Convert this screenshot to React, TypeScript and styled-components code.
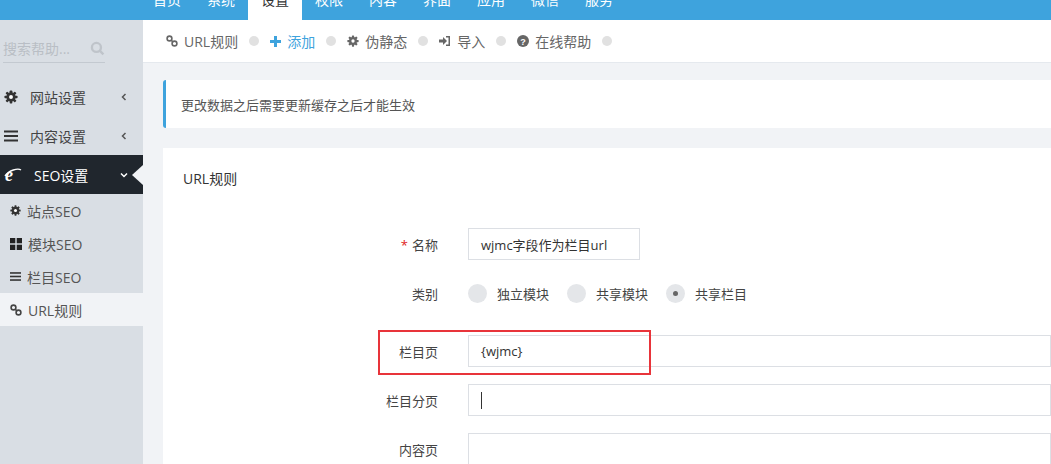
import React from 'react';
import styled, { createGlobalStyle } from 'styled-components';

const Global = createGlobalStyle`
  html, body { margin: 0; padding: 0; overflow: hidden; }
  body { font-family: "Open Sans", "Noto Sans CJK SC", sans-serif; font-size: 13px; color: #555; background: #f1f3f6; }
`;

const Page = styled.div`
  width: 1051px;
  height: 464px;
  display: flex;
  flex-direction: column;
  overflow: hidden;
`;

const TopBar = styled.div`
  height: 20px;
  background: #3ea3dd;
  overflow: hidden;
  flex-shrink: 0;
`;

const NavList = styled.div`
  display: flex;
  margin-top: -20px;
  padding-left: 140px;
`;

const NavItem = styled.div<{ $active?: boolean }>`
  height: 40px;
  line-height: 40px;
  padding: 0 13px;
  font-size: 14px;
  color: ${(p) => (p.$active ? '#333' : '#fff')};
  background: ${(p) => (p.$active ? '#fff' : 'transparent')};
`;

const Body = styled.div`
  flex: 1;
  display: flex;
  min-height: 0;
`;

const Sidebar = styled.div`
  width: 143px;
  flex-shrink: 0;
  background: #d9dee4;
`;

const Search = styled.div`
  margin: 14px 0 0 3px;
  width: 102px;
  height: 28px;
  border-bottom: 1px solid #c3c9d0;
  display: flex;
  align-items: center;
  justify-content: space-between;
  color: #b9bec5;
  font-size: 14px;
`;

const MenuItem = styled.div<{ $dark?: boolean }>`
  height: 39px;
  display: flex;
  align-items: center;
  padding: 0 14px 0 4px;
  gap: 12px;
  font-size: 14px;
  color: ${(p) => (p.$dark ? '#fff' : '#444')};
  background: ${(p) => (p.$dark ? '#20262d' : 'transparent')};
  position: relative;
  span { flex: 1; }
`;

const Notch = styled.div`
  position: absolute;
  right: 0;
  top: 10px;
  border-style: solid;
  border-width: 10px 11px 10px 0;
  border-color: transparent #f1f3f6 transparent transparent;
`;

const SubItem = styled.div<{ $active?: boolean }>`
  height: 33px;
  display: flex;
  align-items: center;
  gap: 6px;
  padding-left: 10px;
  font-size: 14px;
  color: #555;
  background: ${(p) => (p.$active ? '#f1f3f6' : 'transparent')};
`;

const Main = styled.div`
  flex: 1;
  display: flex;
  flex-direction: column;
  min-width: 0;
`;

const Toolbar = styled.div`
  height: 42px;
  background: #fff;
  border-bottom: 1px solid #e5e9ee;
  display: flex;
  align-items: center;
  padding-left: 23px;
  gap: 11px;
  font-size: 14px;
  color: #666;
  flex-shrink: 0;
`;

const Tool = styled.div<{ $blue?: boolean }>`
  display: flex;
  align-items: center;
  gap: 6px;
  color: ${(p) => (p.$blue ? '#3ea3dd' : '#666')};
`;

const Dot = styled.div`
  width: 10px;
  height: 10px;
  border-radius: 50%;
  background: #e1e1e1;
`;

const Content = styled.div`
  padding: 17px 0 0 20px;
  display: flex;
  flex-direction: column;
  gap: 20px;
`;

const Notice = styled.div`
  height: 48px;
  background: #fff;
  border-left: 3px solid #3ea3dd;
  border-radius: 3px 0 0 3px;
  display: flex;
  align-items: center;
  padding-left: 15px;
  color: #555;
`;

const Card = styled.div`
  background: #fff;
  padding: 20px 0 0 20px;
  height: 330px;
`;

const CardTitle = styled.div`
  font-size: 14px;
  color: #333;
  margin-bottom: 40px;
`;

const Row = styled.div`
  display: grid;
  grid-template-columns: 255px 1fr;
  column-gap: 30px;
  align-items: center;
  height: 32px;
  margin-bottom: 17px;
  position: relative;
`;

const Label = styled.div`
  text-align: right;
  font-size: 13px;
  color: #444;
  em { color: #e02222; font-style: normal; margin-right: 4px; }
`;

const Input = styled.div<{ $w?: number }>`
  height: 32px;
  box-sizing: border-box;
  border: 1px solid #dcdfe4;
  padding: 0 12px;
  display: flex;
  align-items: center;
  font-size: 13px;
  color: #333;
  width: ${(p) => (p.$w ? `${p.$w}px` : 'auto')};
`;

const Caret = styled.div`
  width: 1px;
  height: 17px;
  background: #333;
`;

const Radios = styled.div`
  display: flex;
  gap: 18px;
  align-items: center;
`;

const Radio = styled.div`
  display: flex;
  align-items: center;
  gap: 10px;
  font-size: 13px;
  color: #444;
`;

const Circle = styled.div<{ $on?: boolean }>`
  width: 19px;
  height: 19px;
  border-radius: 50%;
  background: #e4e6e9;
  display: flex;
  align-items: center;
  justify-content: center;
  &::after {
    content: '';
    display: ${(p) => (p.$on ? 'block' : 'none')};
    width: 5px;
    height: 5px;
    border-radius: 50%;
    background: #666;
  }
`;

const Highlight = styled.div`
  position: absolute;
  left: 195px;
  top: -5px;
  width: 273px;
  height: 45px;
  border: 2px solid #e8343a;
  box-sizing: border-box;
  pointer-events: none;
`;

const Gear = ({ c = '#333', s = 12 }: { c?: string; s?: number }) => (
  <svg width={s} height={s} viewBox="0 0 16 16">
    <g fill={c}>
      {[0, 45, 90, 135].map((a) => (
        <rect key={a} x="6.5" y="0.5" width="3" height="15" rx="0.8" transform={`rotate(${a} 8 8)`} />
      ))}
      <circle cx="8" cy="8" r="5.3" />
    </g>
    <circle cx="8" cy="8" r="2.2" fill="#fff" />
  </svg>
);

const Bars = ({ s = 12 }: { s?: number }) => (
  <svg width={s} height={s} viewBox="0 0 14 12">
    <rect y="0.5" width="14" height="2" fill="#333" />
    <rect y="5" width="14" height="2" fill="#333" />
    <rect y="9.5" width="14" height="2" fill="#333" />
  </svg>
);

const LinkIcon = ({ c = '#444' }: { c?: string }) => (
  <svg width="12" height="12" viewBox="0 0 12 12" fill="none" stroke={c} strokeWidth="1.6">
    <circle cx="3.5" cy="3.5" r="2.4" />
    <circle cx="8.5" cy="8.5" r="2.4" />
    <path d="M5 5l2 2" />
  </svg>
);

const Chevron = ({ down }: { down?: boolean }) => (
  <svg width="10" height="10" viewBox="0 0 10 10" fill="none" stroke={down ? '#fff' : '#555'} strokeWidth="1.5">
    {down ? <path d="M2 3.5l3 3 3-3" /> : <path d="M6.5 2l-3 3 3 3" />}
  </svg>
);

export default function App() {
  return (
    <Page>
      <Global />
      <TopBar>
        <NavList>
          {['首页', '系统', '设置', '权限', '内容', '界面', '应用', '微信', '服务'].map((n) => (
            <NavItem key={n} $active={n === '设置'}>{n}</NavItem>
          ))}
        </NavList>
      </TopBar>
      <Body>
        <Sidebar>
          <Search>
            <span>搜索帮助...</span>
            <svg width="15" height="15" viewBox="0 0 14 14" fill="none" stroke="#bfc4ca" strokeWidth="2.2">
              <circle cx="6" cy="6" r="4.2" />
              <path d="M9 9l3.5 3.5" />
            </svg>
          </Search>
          <div style={{ height: 14 }} />
          <MenuItem><Gear s={14} /><span>网站设置</span><Chevron /></MenuItem>
          <MenuItem><Bars s={14} /><span>内容设置</span><Chevron /></MenuItem>
          <MenuItem $dark>
            <svg width="18" height="16" viewBox="0 0 18 16">
              <text x="1" y="14" fontSize="18" fontWeight="bold" fontStyle="italic" fill="#fff" fontFamily="Liberation Serif, serif">e</text>
              <path d="M1 9c4-6 13-8 16-6" stroke="#fff" strokeWidth="1.4" fill="none" />
            </svg>
            <span>SEO设置</span><Chevron down /><Notch />
          </MenuItem>
          <SubItem><Gear s={11} />站点SEO</SubItem>
          <SubItem>
            <svg width="12" height="12" viewBox="0 0 12 12" fill="#222">
              <rect width="5.3" height="5.3" /><rect x="6.7" width="5.3" height="5.3" />
              <rect y="6.7" width="5.3" height="5.3" /><rect x="6.7" y="6.7" width="5.3" height="5.3" />
            </svg>
            模块SEO
          </SubItem>
          <SubItem><Bars s={11} />栏目SEO</SubItem>
          <SubItem $active><LinkIcon />URL规则</SubItem>
        </Sidebar>
        <Main>
          <Toolbar>
            <Tool><LinkIcon c="#666" />URL规则</Tool><Dot />
            <Tool $blue>
              <svg width="11" height="11" viewBox="0 0 11 11" fill="#3ea3dd"><rect x="4" width="3" height="11" /><rect y="4" width="11" height="3" /></svg>
              添加
            </Tool><Dot />
            <Tool><Gear c="#666" s={12} />伪静态</Tool><Dot />
            <Tool>
              <svg width="12" height="12" viewBox="0 0 12 12" fill="#666"><path d="M0 4.5h4V2l4 4-4 4V7.5H0z" /><path d="M7 1h4v10H7V9.5h2.5v-7H7z" /></svg>
              导入
            </Tool><Dot />
            <Tool>
              <svg width="12" height="12" viewBox="0 0 12 12"><circle cx="6" cy="6" r="6" fill="#666" /><text x="6" y="9.5" fontSize="9" fontWeight="bold" fill="#fff" textAnchor="middle" fontFamily="Liberation Sans, sans-serif">?</text></svg>
              在线帮助
            </Tool><Dot />
          </Toolbar>
          <Content>
            <Notice>更改数据之后需要更新缓存之后才能生效</Notice>
            <Card>
              <CardTitle>URL规则</CardTitle>
              <Row><Label><em>*</em>名称</Label><Input $w={172}>wjmc字段作为栏目url</Input></Row>
              <Row>
                <Label>类别</Label>
                <Radios>
                  <Radio><Circle />独立模块</Radio>
                  <Radio><Circle />共享模块</Radio>
                  <Radio><Circle $on />共享栏目</Radio>
                </Radios>
              </Row>
              <div style={{ height: 9 }} />
              <Row><Label>栏目页</Label><Input>{'{wjmc}'}</Input><Highlight /></Row>
              <Row><Label>栏目分页</Label><Input><Caret /></Input></Row>
              <Row><Label>内容页</Label><Input /></Row>
            </Card>
          </Content>
        </Main>
      </Body>
    </Page>
  );
}
